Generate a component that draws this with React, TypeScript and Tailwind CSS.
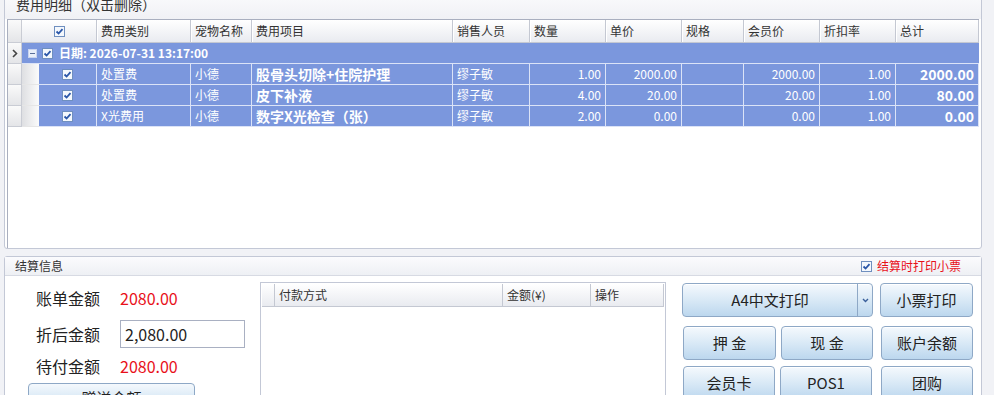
const font = { fontFamily: '"Noto Sans CJK SC", "Noto Sans", sans-serif' };

function Check({ className = "" }: { className?: string }) {
  return (
    <svg width="11" height="11" viewBox="0 0 11 11" className={className}>
      <rect x="0.5" y="0.5" width="10" height="10" fill="#f4f8fd" stroke="#6f8fbf" />
      <path d="M2.5 5.5 L4.6 7.5 L8.5 3.2" fill="none" stroke="#2a56a8" strokeWidth="1.8" />
    </svg>
  );
}

const cols = [
  { label: "费用类别", w: "w-[94px]" },
  { label: "宠物名称", w: "w-[61px]" },
  { label: "费用项目", w: "w-[201px]" },
  { label: "销售人员", w: "w-[77px]" },
  { label: "数量", w: "w-[76px]" },
  { label: "单价", w: "w-[76px]" },
  { label: "规格", w: "w-[62px]" },
  { label: "会员价", w: "w-[76px]" },
  { label: "折扣率", w: "w-[76px]" },
  { label: "总计", w: "w-[83px]" },
];

const rows = [
  { type: "处置费", pet: "小德", item: "股骨头切除+住院护理", staff: "缪子敏", qty: "1.00", price: "2000.00", spec: "", vip: "2000.00", rate: "1.00", total: "2000.00" },
  { type: "处置费", pet: "小德", item: "皮下补液", staff: "缪子敏", qty: "4.00", price: "20.00", spec: "", vip: "20.00", rate: "1.00", total: "80.00" },
  { type: "X光费用", pet: "小德", item: "数字X光检查（张）", staff: "缪子敏", qty: "2.00", price: "0.00", spec: "", vip: "0.00", rate: "1.00", total: "0.00" },
];

const rowHead = "w-[14px] shrink-0 border-r border-b border-[#c9ccd4] bg-gradient-to-b from-[#fafafa] to-[#e4e5e8]";
const cell = "shrink-0 border-r border-b border-[#dbe3f7] flex items-center px-[4px] text-white";

function Btn({ label, w }: { label: string; w: string }) {
  return (
    <div className={`${w} h-[34px] rounded-[4px] border border-[#8ea8c6] bg-gradient-to-b from-[#f5f9fd] via-[#d9e9f6] to-[#bcd7ee] shadow-[inset_0_1px_0_#fff] flex items-center justify-center text-[15px] text-[#222]`}>
      {label}
    </div>
  );
}

export default function App() {
  return (
    <div className="w-[994px] h-[395px] overflow-hidden bg-[#f1f2f6] text-[#222]" style={font}>
      {/* 费用明细 */}
      <div className="ml-[4px] w-[978px] h-[257px] -mt-[8px] border border-[#c3c8d6] rounded-[3px] bg-white flex flex-col">
        <div className="h-[26px] px-[11px] pb-[4px] flex items-center text-[14px] text-[#333] bg-gradient-to-b from-[#fbfbfd] to-[#f0f1f5]">
          费用明细（双击删除）
        </div>
        <div className="ml-[2px] w-[972px] flex-1 border-l border-t border-[#a9afbf] bg-white">
          {/* header */}
          <div className="flex h-[23px] text-[12px] text-[#333]">
            <div className={rowHead} />
            <div className="w-[75px] shrink-0 flex items-center justify-center border-r border-b border-[#c4c8d2] bg-gradient-to-b from-white to-[#e9ebf0]">
              <Check />
            </div>
            {cols.map((c) => (
              <div
                key={c.label}
                className={`${c.w} shrink-0 flex items-center px-[4px] border-r border-b border-[#c4c8d2] bg-gradient-to-b from-white to-[#e9ebf0] shadow-[inset_1px_0_0_#fff]`}
              >
                {c.label}
              </div>
            ))}
          </div>

          {/* group row */}
          <div className="flex h-[21px]">
            <div className={`${rowHead} flex items-center justify-center`}>
              <svg width="6" height="9" viewBox="0 0 6 9">
                <path d="M1 1 L4.5 4.5 L1 8" fill="none" stroke="#444" strokeWidth="1.6" />
              </svg>
            </div>
            <div className="w-[957px] bg-[#7b97dd] border-b border-[#dbe3f7] flex items-center gap-[5px] pl-[6px] text-white text-[12px] font-bold">
              <svg width="9" height="9" viewBox="0 0 9 9">
                <rect x="0.5" y="0.5" width="8" height="8" fill="#e9eef9" stroke="#c9d4ef" />
                <path d="M2 4.5 H7" stroke="#5a6e9a" strokeWidth="1" />
              </svg>
              <Check />
              <span className="ml-[1px]">日期: 2026-07-31 13:17:00</span>
            </div>
          </div>

          {/* data rows */}
          {rows.map((r, i) => (
            <div key={i} className="flex h-[21px] text-[12px]">
              <div className={rowHead} />
              <div className="w-[17px] shrink-0 bg-gradient-to-r from-[#dedfe2] to-[#fbfbfb] border-b border-[#e6e6e6]" />
              <div className={`${cell} w-[58px] justify-center bg-[#7b97dd]`}>
                <Check />
              </div>
              <div className={`${cell} w-[94px] bg-[#7b97dd] text-[#eef2fc]`}>{r.type}</div>
              <div className={`${cell} w-[61px] bg-[#7b97dd] text-[#eef2fc]`}>{r.pet}</div>
              <div className={`${cell} w-[201px] bg-[#7b97dd] text-[14px] font-bold`}>{r.item}</div>
              <div className={`${cell} w-[77px] bg-[#7b97dd] text-[#eef2fc]`}>{r.staff}</div>
              <div className={`${cell} w-[76px] bg-[#7b97dd] justify-end text-[#eef2fc]`}>{r.qty}</div>
              <div className={`${cell} w-[76px] bg-[#7b97dd] justify-end text-[#eef2fc]`}>{r.price}</div>
              <div className={`${cell} w-[62px] bg-[#7b97dd]`}>{r.spec}</div>
              <div className={`${cell} w-[76px] bg-[#7b97dd] justify-end text-[#eef2fc]`}>{r.vip}</div>
              <div className={`${cell} w-[76px] bg-[#7b97dd] justify-end text-[#eef2fc]`}>{r.rate}</div>
              <div className={`${cell} w-[83px] bg-[#7b97dd] justify-end text-[14px] font-bold`}>{r.total}</div>
            </div>
          ))}
        </div>
      </div>

      {/* 结算信息 */}
      <div className="ml-[4px] mt-[7px] w-[978px] h-[160px] border border-[#c3c8d6] rounded-[3px] bg-white flex flex-col">
        <div className="h-[22px] px-[10px] flex items-center justify-between border-b border-[#d7dae3] bg-gradient-to-b from-[#fbfbfd] to-[#eef0f4] text-[12px] text-[#333]">
          <span>结算信息</span>
          <span className="flex items-center gap-[5px] mr-[10px] text-[#e8101a]">
            <Check />
            结算时打印小票
          </span>
        </div>

        <div className="flex">
          {/* amounts */}
          <div className="w-[255px] shrink-0 pt-[11px]">
            <div className="flex items-center h-[22px] text-[16px]">
              <span className="ml-[31px] w-[84px]">账单金额</span>
              <span className="text-[#e8101a]">2080.00</span>
            </div>
            <div className="flex items-center mt-[11px] h-[28px] text-[16px]">
              <span className="ml-[31px] w-[84px]">折后金额</span>
              <div className="w-[125px] h-[28px] border border-[#a9b0c2] flex items-center px-[4px]">2,080.00</div>
            </div>
            <div className="flex items-center mt-[7px] h-[22px] text-[16px]">
              <span className="ml-[31px] w-[84px]">待付金额</span>
              <span className="text-[#e8101a]">2080.00</span>
            </div>
            <div className="ml-[23px] mt-[6px] w-[167px] h-[30px] rounded-[4px] border border-[#8ea8c6] bg-gradient-to-b from-[#f5f9fd] via-[#d9e9f6] to-[#bcd7ee] flex justify-center pt-[3px] text-[15px]">
              赠送金额
            </div>
          </div>

          {/* payment grid */}
          <div className="w-[406px] shrink-0 h-[140px] mt-[6px] border-l border-t border-r border-[#c3c8d6] p-[1px]">
            <div className="flex h-[23px] text-[12px] text-[#333]">
              <div className="w-[13px] border-r border-b border-[#c4c8d2] bg-gradient-to-b from-white to-[#e9ebf0]" />
              <div className="w-[228px] flex items-center px-[4px] border-r border-b border-[#c4c8d2] bg-gradient-to-b from-white to-[#e9ebf0]">付款方式</div>
              <div className="w-[88px] flex items-center px-[4px] border-r border-b border-[#c4c8d2] bg-gradient-to-b from-white to-[#e9ebf0]">金额(¥)</div>
              <div className="w-[73px] flex items-center px-[4px] border-r border-b border-[#c4c8d2] bg-gradient-to-b from-white to-[#e9ebf0]">操作</div>
            </div>
          </div>

          {/* buttons */}
          <div className="ml-[16px] mt-[7px] flex flex-col gap-[9px]">
            <div className="flex gap-[7px]">
              <div className="w-[191px] h-[34px] rounded-[4px] border border-[#8ea8c6] bg-gradient-to-b from-[#f5f9fd] via-[#d9e9f6] to-[#bcd7ee] shadow-[inset_0_1px_0_#fff] flex text-[15px]">
                <div className="flex-1 flex items-center justify-center">A4中文打印</div>
                <div className="w-[15px] border-l border-[#8ea8c6] flex items-center justify-center">
                  <svg width="7" height="5" viewBox="0 0 7 5">
                    <path d="M1 1 L3.5 3.5 L6 1" fill="none" stroke="#3a5f9a" strokeWidth="1.4" />
                  </svg>
                </div>
              </div>
              <Btn label="小票打印" w="w-[93px]" />
            </div>
            <div className="flex pl-[1px]">
              <Btn label="押 金" w="w-[93px]" />
              <div className="w-[5px]" />
              <Btn label="现 金" w="w-[92px]" />
              <div className="w-[8px]" />
              <Btn label="账户余额" w="w-[92px]" />
            </div>
            <div className="flex pl-[1px] -mt-[3px]">
              <Btn label="会员卡" w="w-[92px]" />
              <div className="w-[5px]" />
              <Btn label="POS1" w="w-[92px]" />
              <div className="w-[9px]" />
              <Btn label="团购" w="w-[92px]" />
            </div>
          </div>
        </div>
      </div>
    </div>
  );
}
